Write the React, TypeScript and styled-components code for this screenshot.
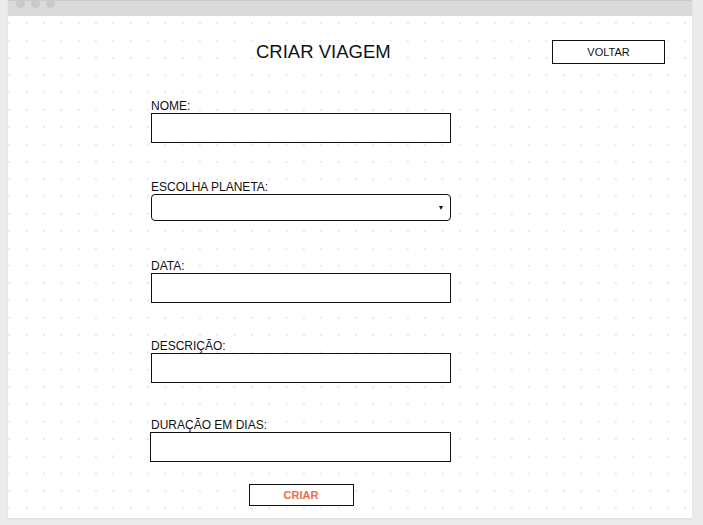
import React from "react";
import styled, { createGlobalStyle } from "styled-components";

const Global = createGlobalStyle`
  html, body { margin: 0; padding: 0; background: #ebebeb; }
  body { font-family: "Liberation Sans", Arial, sans-serif; color: #1a1a1a; }
  * { box-sizing: border-box; }
`;

const Page = styled.div`
  width: 703px;
  height: 525px;
  padding: 0 11px 7px 8px;
  display: flex;
`;

const Window = styled.div`
  flex: 1;
  display: flex;
  flex-direction: column;
  background: #fff;
  box-shadow: 0 1px 2px rgba(0, 0, 0, 0.06);
`;

const TitleBar = styled.div`
  height: 16px;
  flex: none;
  background: #dadada;
  border-top: 1px solid #cbcbcb;
  display: flex;
  gap: 6px;
  padding-left: 8px;
  align-items: flex-start;
  overflow: hidden;
`;

const Light = styled.span`
  width: 9px;
  height: 9px;
  border-radius: 50%;
  background: #cacaca;
  margin-top: -2px;
`;

const Canvas = styled.div`
  flex: 1;
  display: flex;
  flex-direction: column;
  background-color: #fff;
  background-image: radial-gradient(circle, #dedede 0.6px, transparent 0.9px);
  background-size: 17.33px 17.33px;
  background-position: 10px -1.5px;
`;

const Header = styled.header`
  display: flex;
  align-items: flex-start;
  padding: 24px 27px 0 248px;
  height: 83px;
`;

const Title = styled.h1`
  margin: 1px 0 0;
  font-size: 18.5px;
  font-weight: 400;
  color: #111;
`;

const BackButton = styled.button`
  margin-left: auto;
  width: 113px;
  height: 24px;
  background: #fff;
  border: 1px solid #111;
  font-family: "Liberation Sans", Arial, sans-serif;
  font-size: 11px;
  color: #111;
  padding: 0;
`;

const Form = styled.form`
  display: flex;
  flex-direction: column;
  width: 300px;
  margin-left: 143px;
  margin-top: 1px;
`;

const Field = styled.div<{ $gap?: number }>`
  display: flex;
  flex-direction: column;
  margin-bottom: ${(p) => p.$gap ?? 37}px;
`;

const Label = styled.label`
  font-size: 12px;
  line-height: 13px;
  color: #111;
`;

const TextInput = styled.input<{ $shift?: number }>`
  width: ${(p) => 300 + (p.$shift ?? 0)}px;
  margin-left: ${(p) => -(p.$shift ?? 0)}px;
  height: 30px;
  border: 1px solid #111;
  background: #fff;
  padding: 0 6px;
  font-size: 12px;
`;

const SelectBox = styled.div`
  position: relative;
  height: 27px;
  border: 1px solid #111;
  border-radius: 4px;
  background: #fff;
`;

const Caret = styled.span`
  position: absolute;
  right: 7px;
  top: 11px;
  width: 0;
  height: 0;
  border-left: 2.5px solid transparent;
  border-right: 2.5px solid transparent;
  border-top: 4px solid #111;
`;

const Submit = styled.button`
  align-self: center;
  width: 105px;
  height: 22px;
  margin-top: -15px;
  background: #fff;
  border: 1px solid #111;
  color: #f26b4a;
  font-family: "Liberation Sans", Arial, sans-serif;
  font-weight: 700;
  font-size: 11px;
  padding: 0;
`;

export default function App() {
  return (
    <>
      <Global />
      <Page>
        <Window>
          <TitleBar>
            <Light />
            <Light />
            <Light />
          </TitleBar>
          <Canvas>
            <Header>
              <Title>CRIAR VIAGEM</Title>
              <BackButton type="button">VOLTAR</BackButton>
            </Header>
            <Form onSubmit={(e) => e.preventDefault()}>
              <Field $gap={38}>
                <Label>NOME:</Label>
                <TextInput />
              </Field>
              <Field $gap={39}>
                <Label>ESCOLHA PLANETA:</Label>
                <SelectBox>
                  <Caret />
                </SelectBox>
              </Field>
              <Field $gap={37}>
                <Label>DATA:</Label>
                <TextInput />
              </Field>
              <Field $gap={36}>
                <Label>DESCRIÇÃO:</Label>
                <TextInput />
              </Field>
              <Field $gap={37}>
                <Label>DURAÇÃO EM DIAS:</Label>
                <TextInput $shift={1} />
              </Field>
              <Submit type="submit">CRIAR</Submit>
            </Form>
          </Canvas>
        </Window>
      </Page>
    </>
  );
}
